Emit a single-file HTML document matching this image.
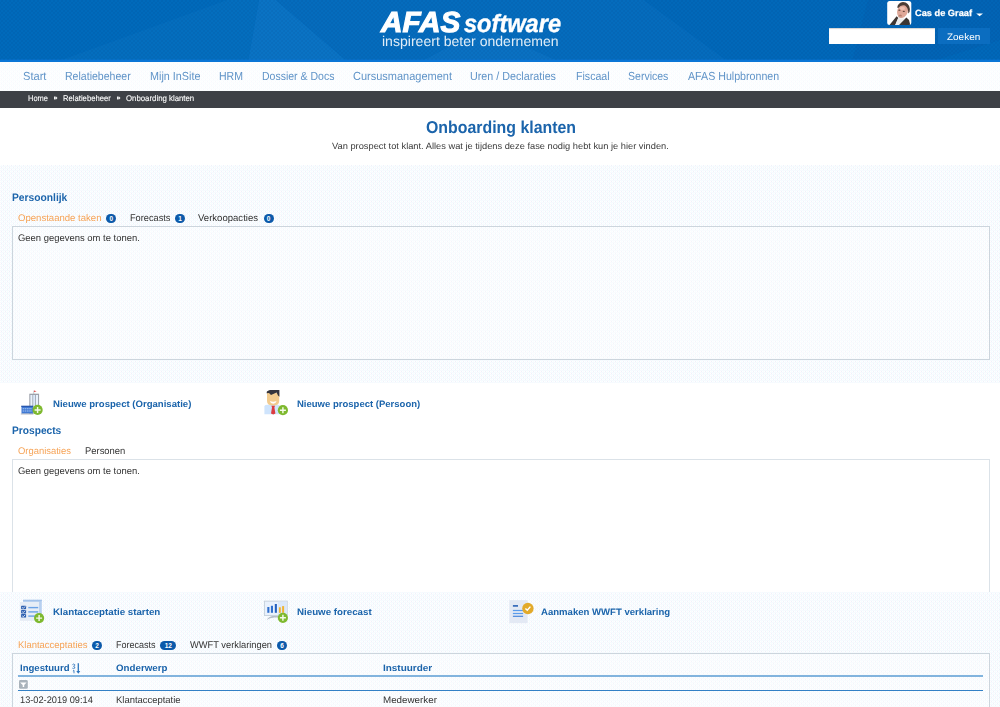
<!DOCTYPE html>
<html><head><meta charset="utf-8"><title>Onboarding klanten</title>
<style>
html,body{margin:0;padding:0;}
html{width:1000px;height:707px;overflow:hidden;}
body{width:1000px;height:707px;overflow:hidden;position:relative;background:#fff;font-family:"Liberation Sans",sans-serif;}
.t{position:absolute;white-space:nowrap;transform-origin:0 50%;line-height:1;text-rendering:geometricPrecision;}
.a{position:absolute;}
#hdr{position:absolute;left:0;top:0;width:1000px;height:62px;background:#006abb;overflow:hidden;}
#hx{position:absolute;left:0;top:0;width:1000px;height:60px;background-image:repeating-linear-gradient(45deg,rgba(0,40,100,.07) 0 1px,transparent 1px 2.83px),repeating-linear-gradient(-45deg,rgba(0,40,100,.07) 0 1px,transparent 1px 2.83px);}
.pat{background-color:#f4f9fe;background-image:conic-gradient(#f1fbff 25%,#ffffff 0 50%,#f1fbff 0 75%,#f0f0fa 0);background-size:2px 2px;}
#nav{position:absolute;left:0;top:62px;width:1000px;height:29px;}
#bc{position:absolute;left:0;top:91px;width:1000px;height:17px;background:#3e4146;}
.sec{position:absolute;left:0;width:1000px;}
.panel{position:absolute;left:12px;width:976px;border:1px solid #ccd5dd;background:rgba(255,255,255,.28);}
.bd{position:absolute;height:9.4px;border-radius:5px;background:#0c5aaa;color:#fff;font-size:6.5px;font-weight:bold;text-align:center;line-height:9.6px;}
.ic{position:absolute;overflow:visible;}
</style></head><body>
<svg class="a" style="left:0;top:0" width="1000" height="707" viewBox="0 0 1000 707" shape-rendering="crispEdges">
<defs><pattern id="px" width="4" height="4" patternUnits="userSpaceOnUse">
<rect width="4" height="4" fill="#f4fdff"/>
<rect x="0" y="0" width="1" height="1" fill="#f8f8fd"/><rect x="2" y="0" width="1" height="1" fill="#f8f8fd"/>
<rect x="0" y="2" width="1" height="1" fill="#f8f8fd"/><rect x="2" y="2" width="1" height="1" fill="#f8f8fd"/>
<rect x="0" y="1" width="1" height="1" fill="#fff"/><rect x="2" y="1" width="1" height="1" fill="#fff"/>
<rect x="0" y="3" width="1" height="1" fill="#fff"/><rect x="2" y="3" width="1" height="1" fill="#fff"/>
<rect x="3" y="1" width="1" height="1" fill="#f0f0fa"/><rect x="1" y="3" width="1" height="1" fill="#f0f0fa"/>
</pattern></defs>
<rect x="0" y="62" width="1000" height="29" fill="url(#px)" opacity="0.45"/>
<rect x="0" y="165" width="1000" height="218" fill="url(#px)"/>
<rect x="0" y="592" width="1000" height="115" fill="url(#px)"/>
</svg>
<div id="hdr">
<svg class="a" style="left:0;top:0" width="1000" height="62" viewBox="0 0 1000 62">
<polygon points="227,0 56,62 248,62 259,0" fill="#046ebe"/>
<polygon points="259,0 248,62 348,62 276,0" fill="#0a73c4"/>
<polygon points="276,0 348,62 420,62 480,30 560,62 729,62 644,0" fill="#056cbd"/>
<polygon points="420,62 484,28 560,62" fill="#0a71c2"/>
<polygon points="644,0 729,62 1000,62 1000,0" fill="#0168b9"/>
<polygon points="868,0 1000,0 1000,40 930,62 852,62" fill="#0264b5"/>
<rect x="0" y="59.6" width="1000" height="2.4" fill="#0b76d6"/>
</svg>
<div id="hx"></div>
<!-- avatar -->
<svg class="a" style="left:887px;top:1px" width="25" height="24" viewBox="0 0 25 24">
<defs><clipPath id="avc"><rect x="0.2" y="0.1" width="24.1" height="23.9" rx="2.5"/></clipPath><filter id="avb" x="-10%" y="-10%" width="120%" height="120%"><feGaussianBlur stdDeviation="0.45"/></filter></defs>
<rect x="0.2" y="0.1" width="24.1" height="23.9" rx="2.5" fill="#fff"/>
<g clip-path="url(#avc)"><g filter="url(#avb)">
<polygon points="2.5,24 9.6,15.2 11.4,17 8,24.5" fill="#3c3632"/>
<polygon points="8,24.5 11,17.2 18.5,17.6 12,24.5" fill="#ececec"/>
<path d="M11.5,24.5 L19.4,16.6 L22,19 L23.4,24.5 Z" fill="#3a3430"/>
<ellipse cx="15.6" cy="10" rx="5.3" ry="7.2" fill="#dfa898" transform="rotate(20 15.6 10)"/>
<ellipse cx="13.2" cy="15" rx="2" ry="1.6" fill="#c89888"/>
<path d="M10.2,6.6 Q11,1.6 16,1.1 Q22,1.4 22.9,8 Q23.1,11 21.2,12.6 Q21.6,7.2 18,4.6 Q14,3.4 11.2,7 Z" fill="#4b3d36"/>
<ellipse cx="15.4" cy="7.4" rx="2.6" ry="1.7" fill="#eec2b2"/><ellipse cx="12.4" cy="9.2" rx="1.1" ry="0.6" fill="#5a4038"/><ellipse cx="16.8" cy="10.4" rx="1.1" ry="0.6" fill="#6a4a40"/><ellipse cx="13.4" cy="14.3" rx="1.5" ry="0.6" fill="#b87868"/>
</g></g>
</svg>
<svg class="a" style="left:976px;top:12px" width="8" height="5" viewBox="0 0 8 5"><polygon points="0.2,1.5 7,1.5 3.6,4.2" fill="#fff"/></svg>
<div class="a" style="left:829px;top:28px;width:106px;height:16px;background:#fff;box-shadow:inset 0 1px 1px rgba(0,0,0,.18)"></div>
<div class="a" style="left:938px;top:28px;width:52px;height:16px;background:#0b6dc0"></div>
</div>
<div id="nav"></div>
<div id="bc"></div>
<svg class="a" style="left:54.4px;top:96.4px" width="4" height="4" viewBox="0 0 4 4"><path d="M0,0.1 L1.9,2 L0,3.9 Z M1.6,0.1 L3.5,2 L1.6,3.9 Z" fill="#f2f2f2"/></svg>
<svg class="a" style="left:116.5px;top:96.4px" width="4" height="4" viewBox="0 0 4 4"><path d="M0,0.1 L1.9,2 L0,3.9 Z M1.6,0.1 L3.5,2 L1.6,3.9 Z" fill="#f2f2f2"/></svg>


<div class="panel" style="top:226px;height:132px"></div>
<div class="bd" style="left:106.2px;top:213.8px;width:10px">0</div>
<div class="bd" style="left:175px;top:213.8px;width:10px">1</div>
<div class="bd" style="left:263.5px;top:213.8px;width:10px">0</div>

<div class="panel" style="top:459px;height:132px;background:#fff;border-color:#dbe2e8;border-bottom:none"></div>


<div class="panel" style="top:653px;height:53px;border-bottom:none"></div>
<div class="bd" style="left:92px;top:640.5px;width:10px">2</div>
<div class="bd" style="left:160.3px;top:640.5px;width:16px">12</div>
<div class="bd" style="left:277px;top:640.5px;width:10px">6</div>
<div class="a" style="left:17.5px;top:675px;width:965.5px;height:2px;background:#82b4de"></div>
<div class="a" style="left:17.5px;top:690px;width:965.5px;height:1px;background:#3380c5"></div>
<!-- filter icon -->
<svg class="a" style="left:19px;top:680px" width="9" height="9" viewBox="0 0 9 9"><rect x="0" y="0" width="8.8" height="8.8" rx="1.4" fill="#a9b3bb"/><path d="M1.1,2.6 H7.6 L5.2,5 V6.9 L3.7,6.9 V5 Z" fill="#fff"/></svg>
<!-- sort icon -->
<svg class="a" style="left:72px;top:663px" width="9" height="11" viewBox="0 0 9 11" fill="none" stroke="#2d74bc">
<path d="M0.4,1.7 Q1.6,0.5 2.7,1.5 Q3.1,2.8 1.5,3.3 Q3.3,3.7 2.8,5.1 Q1.6,6.2 0.3,5.1" stroke-width="0.85"/>
<path d="M0.9,8.1 L2,7.4 V10.3" stroke-width="0.85"/>
<path d="M6.3,0.2 V9" stroke-width="1.3"/>
<path d="M4.3,7.9 L6.3,10.7 L8.3,7.9 Z" fill="#2d74bc" stroke="none"/>
</svg>

<!-- building icon: origin (20,388) -->
<svg class="ic" style="left:20px;top:388px" width="26" height="28" viewBox="0 0 26 28">
<rect x="13.5" y="2.6" width="0.7" height="3.4" fill="#b0b4ba"/>
<polygon points="14,2.4 16.6,3.2 14,4.1" fill="#e03c3c"/>
<rect x="9.3" y="5.7" width="9.8" height="20.2" fill="#9da2ac"/>
<rect x="10.4" y="7" width="2" height="18.6" fill="#e9f2fd"/>
<rect x="13.2" y="7" width="2" height="18.6" fill="#dbe9fb"/>
<rect x="16" y="7" width="2" height="18.6" fill="#e9f2fd"/>
<rect x="1.5" y="18" width="11.4" height="7.6" fill="#4079d3"/>
<rect x="1.2" y="17.7" width="12" height="1.1" fill="#244fa6"/>
<path d="M2.6,20.7 H12 M2.6,23 H12" stroke="#a8c8f4" stroke-width="1.1" stroke-dasharray="1.6 0.6"/>
<rect x="0.8" y="25.6" width="12.6" height="0.8" fill="#a6a9ae"/>
<circle cx="17.6" cy="21.9" r="5.1" fill="#7eb92f"/>
<path d="M17.6,18.9 V24.9 M14.6,21.9 H20.6" stroke="#f4fae8" stroke-width="1.45"/>
</svg>
<!-- person icon: origin (262,388) -->
<svg class="ic" style="left:262px;top:388px" width="28" height="28" viewBox="0 0 28 28">
<path d="M2.4,18.6 Q2.4,16.8 5,16.8 H16 Q18.2,16.8 18.2,18.6 V26.2 H2.4 Z" fill="#cfe4fc"/>
<path d="M5,5 H17.2 V13 Q17.2,17.6 11.2,17.6 Q5,17.6 5,13 Z" fill="#f2cb8e"/>
<path d="M4.6,5.2 Q4.2,3.2 6.6,2.4 L8,2 H17.4 V8.8 L16,7.6 L14.6,4.6 L9,7 L7,5 Z" fill="#34343c"/>
<path d="M7.8,13 Q11.2,14.4 14.6,13 Q13.8,15.8 11.2,15.8 Q8.6,15.8 7.8,13 Z" fill="#fff"/>
<path d="M9.4,17.8 H13 L12.4,19.6 L13.4,25.6 L11.2,26.6 L9,25.6 L10,19.6 Z" fill="#dc3c40"/>
<circle cx="20.9" cy="22.2" r="5.1" fill="#7eb92f"/>
<path d="M20.9,19.2 V25.2 M17.9,22.2 H23.9" stroke="#f4fae8" stroke-width="1.45"/>
</svg>
<!-- checklist icon: origin (18,597) -->
<svg class="ic" style="left:18px;top:597px" width="28" height="28" viewBox="0 0 28 28">
<rect x="5" y="2.8" width="18.8" height="15.4" fill="#b7d0f0"/>
<rect x="5" y="2.8" width="18.8" height="1.4" fill="#a3c2ea"/>
<rect x="1.9" y="4.9" width="19.2" height="19" fill="#e7edf6"/>
<rect x="3.1" y="8.7" width="5" height="3.5" rx="0.6" fill="#2d5fb0"/>
<rect x="3.1" y="12.9" width="5" height="3.5" rx="0.6" fill="#2d5fb0"/>
<rect x="3.1" y="17.1" width="5" height="3.5" rx="0.6" fill="#2d5fb0"/>
<path d="M4.2,10.4 L5.3,11.4 L7.2,9.4 M4.2,14.6 L5.3,15.6 L7.2,13.6 M4.2,18.8 L5.3,19.8 L7.2,17.8" stroke="#fff" stroke-width="0.8" fill="none"/>
<rect x="10.3" y="9.9" width="9.9" height="1.4" fill="#6aa2e6"/>
<rect x="10.3" y="14.2" width="9.9" height="1.4" fill="#6aa2e6"/>
<rect x="10.3" y="18.4" width="9.9" height="1.4" fill="#6aa2e6"/>
<circle cx="21.1" cy="21.1" r="5.1" fill="#7eb92f"/>
<path d="M21.1,18.1 V24.1 M18.1,21.1 H24.1" stroke="#f4fae8" stroke-width="1.45"/>
</svg>
<!-- forecast icon: origin (262,597) -->
<svg class="ic" style="left:262px;top:597px" width="28" height="28" viewBox="0 0 28 28">
<path d="M4.8,23 Q7.4,20.8 12.4,20.6 L17.6,20.6 L17.6,19 L10.2,19 Q6,20.2 4.8,23Z" fill="#b4bdc7"/>
<rect x="2" y="3.7" width="23.7" height="15.3" fill="#c7d1db"/>
<rect x="2.9" y="4.6" width="21.9" height="13.5" fill="#e9f1fc"/>
<rect x="16" y="4.6" width="8.8" height="13.5" fill="#dbe8fa"/>
<rect x="5.3" y="10" width="2.1" height="5.8" fill="#2f6fce"/>
<rect x="8.9" y="8.8" width="2.1" height="7" fill="#2f6fce"/>
<rect x="12.8" y="7" width="2.1" height="8.8" fill="#2461c0"/>
<rect x="16.9" y="10.3" width="1.9" height="5.5" fill="#f0b432"/>
<rect x="20.1" y="9.1" width="2" height="6.7" fill="#f0b432"/>
<circle cx="20.9" cy="20.8" r="5.1" fill="#7eb92f"/>
<path d="M20.9,17.8 V23.8 M17.9,20.8 H23.9" stroke="#f4fae8" stroke-width="1.45"/>
</svg>
<!-- wwft icon: origin (507,597) -->
<svg class="ic" style="left:507px;top:597px" width="28" height="28" viewBox="0 0 28 28">
<rect x="2.3" y="3.1" width="18.3" height="23.1" fill="#e3e9f4"/>
<rect x="5.9" y="8.1" width="5.1" height="1.6" fill="#2a62b6"/>
<rect x="5.9" y="12.9" width="10.2" height="1.2" fill="#5a9cec"/>
<rect x="5.9" y="15.9" width="10.2" height="1.2" fill="#5a9cec"/>
<rect x="5.9" y="18.7" width="10.2" height="1.2" fill="#4a88dc"/>
<circle cx="20.9" cy="11.5" r="5.7" fill="#e2aa2a"/>
<path d="M18.4,11.4 L20.3,13.3 L23.4,9.6" stroke="#fff" stroke-width="1.4" fill="none"/>
</svg>

<span class="t" style="left:380.6px;top:9.25px;font-size:29px;color:#fff;transform:scaleX(1.0266);font-weight:bold;font-style:italic;-webkit-text-stroke:1.1px #fff;">AFAS</span>
<span class="t" style="left:464.0px;top:11.74px;font-size:25px;color:#fff;transform:scaleX(0.9435);font-weight:bold;font-style:italic;-webkit-text-stroke:0.4px #fff;">software</span>
<span class="t" style="left:382.4px;top:34.15px;font-size:14px;color:rgba(255,255,255,.88);transform:scaleX(1.0040);">inspireert beter ondernemen</span>
<span class="t" style="left:915.0px;top:8.90px;font-size:9px;color:#fff;transform:scaleX(1.0264);font-weight:bold;-webkit-text-stroke:0.25px #fff;">Cas de Graaf</span>
<span class="t" style="left:947.0px;top:32.82px;font-size:9.5px;color:#fff;transform:scaleX(1.0477);">Zoeken</span>
<span class="t" style="left:23.2px;top:70.81px;font-size:11.7px;color:#6094c8;transform:scaleX(0.9478);">Start</span>
<span class="t" style="left:65.3px;top:70.81px;font-size:11.7px;color:#6094c8;transform:scaleX(0.9027);">Relatiebeheer</span>
<span class="t" style="left:149.6px;top:70.81px;font-size:11.7px;color:#6094c8;transform:scaleX(0.9234);">Mijn InSite</span>
<span class="t" style="left:219.0px;top:70.81px;font-size:11.7px;color:#6094c8;transform:scaleX(0.9014);">HRM</span>
<span class="t" style="left:262.0px;top:70.81px;font-size:11.7px;color:#6094c8;transform:scaleX(0.8989);">Dossier &amp; Docs</span>
<span class="t" style="left:353.0px;top:70.81px;font-size:11.7px;color:#6094c8;transform:scaleX(0.9406);">Cursusmanagement</span>
<span class="t" style="left:470.4px;top:70.81px;font-size:11.7px;color:#6094c8;transform:scaleX(0.9193);">Uren / Declaraties</span>
<span class="t" style="left:576.0px;top:70.81px;font-size:11.7px;color:#6094c8;transform:scaleX(0.9073);">Fiscaal</span>
<span class="t" style="left:628.4px;top:70.81px;font-size:11.7px;color:#6094c8;transform:scaleX(0.9012);">Services</span>
<span class="t" style="left:687.6px;top:70.81px;font-size:11.7px;color:#6094c8;transform:scaleX(0.9114);">AFAS Hulpbronnen</span>
<span class="t" style="left:28.0px;top:94.17px;font-size:8.3px;color:#fff;transform:scaleX(0.9033);-webkit-text-stroke:0.1px #fff;">Home</span>
<span class="t" style="left:63.2px;top:94.17px;font-size:8.3px;color:#fff;transform:scaleX(0.9251);-webkit-text-stroke:0.1px #fff;">Relatiebeheer</span>
<span class="t" style="left:125.8px;top:94.17px;font-size:8.3px;color:#fff;transform:scaleX(0.9417);-webkit-text-stroke:0.1px #fff;">Onboarding klanten</span>
<span class="t" style="left:426.0px;top:118.64px;font-size:17.2px;color:#1b64ab;transform:scaleX(0.9240);font-weight:bold;">Onboarding klanten</span>
<span class="t" style="left:332.0px;top:141.58px;font-size:9px;color:#3a3a3a;transform:scaleX(1.0314);">Van prospect tot klant. Alles wat je tijdens deze fase nodig hebt kun je hier vinden.</span>
<span class="t" style="left:12.2px;top:192.57px;font-size:10.8px;color:#1b64ab;transform:scaleX(0.9501);font-weight:bold;">Persoonlijk</span>
<span class="t" style="left:17.7px;top:214.07px;font-size:9.7px;color:#f6a356;transform:scaleX(0.9874);">Openstaande taken</span>
<span class="t" style="left:129.6px;top:214.07px;font-size:9.7px;color:#333;transform:scaleX(0.9499);">Forecasts</span>
<span class="t" style="left:198.0px;top:214.07px;font-size:9.7px;color:#333;transform:scaleX(0.9859);">Verkoopacties</span>
<span class="t" style="left:17.7px;top:234.38px;font-size:9.5px;color:#333;transform:scaleX(0.9940);">Geen gegevens om te tonen.</span>
<span class="t" style="left:53.0px;top:399.53px;font-size:9.3px;color:#1b64ab;transform:scaleX(1.0303);font-weight:bold;">Nieuwe prospect (Organisatie)</span>
<span class="t" style="left:297.3px;top:399.53px;font-size:9.3px;color:#1b64ab;transform:scaleX(1.0235);font-weight:bold;">Nieuwe prospect (Persoon)</span>
<span class="t" style="left:12.2px;top:425.76px;font-size:10.8px;color:#1b64ab;transform:scaleX(0.9441);font-weight:bold;">Prospects</span>
<span class="t" style="left:17.6px;top:446.69px;font-size:9.7px;color:#f6a356;transform:scaleX(0.9726);">Organisaties</span>
<span class="t" style="left:84.5px;top:446.69px;font-size:9.7px;color:#333;transform:scaleX(0.9715);">Personen</span>
<span class="t" style="left:17.7px;top:467.38px;font-size:9.5px;color:#333;transform:scaleX(0.9940);">Geen gegevens om te tonen.</span>
<span class="t" style="left:53.0px;top:608.41px;font-size:9.3px;color:#1b64ab;transform:scaleX(1.0487);font-weight:bold;">Klantacceptatie starten</span>
<span class="t" style="left:297.3px;top:608.41px;font-size:9.3px;color:#1b64ab;transform:scaleX(1.0475);font-weight:bold;">Nieuwe forecast</span>
<span class="t" style="left:541.4px;top:608.41px;font-size:9.3px;color:#1b64ab;transform:scaleX(1.0291);font-weight:bold;">Aanmaken WWFT verklaring</span>
<span class="t" style="left:17.5px;top:640.65px;font-size:9.7px;color:#f6a356;transform:scaleX(0.9776);">Klantacceptaties</span>
<span class="t" style="left:116.0px;top:640.65px;font-size:9.7px;color:#333;transform:scaleX(0.9287);">Forecasts</span>
<span class="t" style="left:190.0px;top:640.65px;font-size:9.7px;color:#333;transform:scaleX(0.9599);">WWFT verklaringen</span>
<span class="t" style="left:19.6px;top:664.09px;font-size:9.3px;color:#1b64ab;transform:scaleX(1.0302);font-weight:bold;">Ingestuurd</span>
<span class="t" style="left:116.0px;top:664.09px;font-size:9.3px;color:#1b64ab;transform:scaleX(1.0473);font-weight:bold;">Onderwerp</span>
<span class="t" style="left:383.3px;top:664.09px;font-size:9.3px;color:#1b64ab;transform:scaleX(1.0699);font-weight:bold;">Instuurder</span>
<span class="t" style="left:19.8px;top:696.20px;font-size:9.5px;color:#333;transform:scaleX(0.9705);">13-02-2019 09:14</span>
<span class="t" style="left:116.0px;top:696.20px;font-size:9.5px;color:#333;transform:scaleX(0.9943);">Klantacceptatie</span>
<span class="t" style="left:383.3px;top:696.20px;font-size:9.5px;color:#333;transform:scaleX(1.0310);">Medewerker</span>
</body></html>
